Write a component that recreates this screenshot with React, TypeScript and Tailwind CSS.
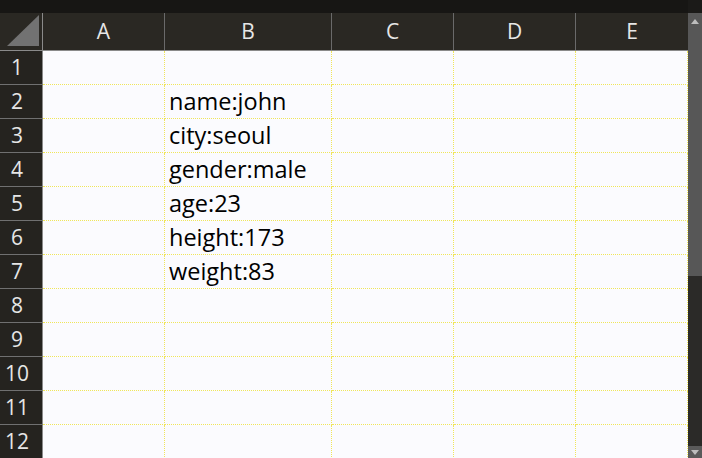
import React from "react";

const cols = [
  { l: "A", w: "w-[122px]" },
  { l: "B", w: "w-[167px]" },
  { l: "C", w: "w-[122px]" },
  { l: "D", w: "w-[122px]" },
  { l: "E", w: "w-[112px]" },
];

const data: Record<number, string> = {
  2: "name:john",
  3: "city:seoul",
  4: "gender:male",
  5: "age:23",
  6: "height:173",
  7: "weight:83",
};

const font = { fontFamily: '"Open Sans", "Noto Sans", sans-serif' };

export default function App() {
  const rows = Array.from({ length: 12 }, (_, i) => i + 1);
  return (
    <div className="w-[702px] h-[458px] overflow-hidden bg-[#1b1a18] flex" style={font}>
      <div className="w-[688px] flex flex-col">
        <div className="h-[13px] bg-[#171614] shrink-0" />
        <div className="flex h-[38px] shrink-0 bg-[#2a2823] border-b border-[#8a8a8a]">
          <div className="w-[43px] h-full border-r border-[#8a8a8a] relative">
            <svg className="absolute left-0 top-0" width="42" height="37" viewBox="0 0 42 37">
              <polygon points="7,33 39,33 39,2" fill="#727272" />
            </svg>
          </div>
          {cols.map((c, i) => (
            <div
              key={c.l}
              className={`${c.w} h-full flex items-center justify-center text-[21px] text-[#e6e6e6] ${i < 4 ? "border-r border-[#6a6a6a]" : ""}`}
            >
              {c.l}
            </div>
          ))}
        </div>
        {rows.map((r) => (
          <div key={r} className="flex h-[34px] shrink-0">
            <div className="w-[43px] h-full bg-[#25231f] border-r border-[#8a8a8a] border-b border-b-[#707070] flex items-center justify-center pr-[8px] text-[21px] text-[#e6e6e6]">
              {r}
            </div>
            {cols.map((c) => (
              <div
                key={c.l}
                className={`${c.w} h-full bg-[#fbfbfe] border-r border-b border-dotted border-[#f0e65a] flex items-center pl-[4px] pt-[1px] text-[23.5px] text-black whitespace-nowrap`}
              >
                {c.l === "B" ? data[r] ?? "" : ""}
              </div>
            ))}
          </div>
        ))}
      </div>
      <div className="w-[14px] flex flex-col bg-[#1b1a18]">
        <div className="h-[13px] shrink-0" />
        <div className="h-[263px] bg-[#575757] flex justify-center pt-[6px] shrink-0">
          <svg width="8" height="5" viewBox="0 0 8 5">
            <polygon points="0,5 8,5 4,0" fill="#bdbdbd" />
          </svg>
        </div>
        <div className="flex-1 bg-[#2b2a28]" />
        <div className="h-[12px] bg-[#5a5a5a] flex justify-center items-center shrink-0">
          <svg width="8" height="5" viewBox="0 0 8 5">
            <polygon points="0,0 8,0 4,5" fill="#bdbdbd" />
          </svg>
        </div>
      </div>
    </div>
  );
}
